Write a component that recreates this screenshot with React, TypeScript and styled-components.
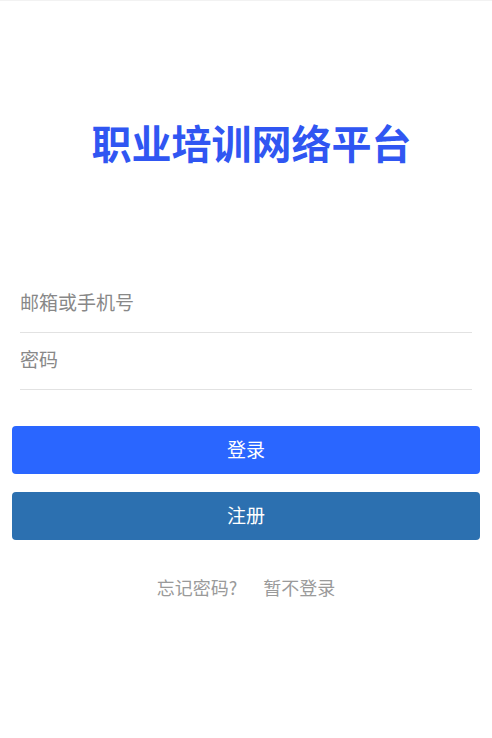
import React from 'react';
import styled, { createGlobalStyle } from 'styled-components';

const GlobalStyle = createGlobalStyle`
    html, body {
        margin: 0;
        padding: 0;
        background: #ffffff;
        font-family: "Noto Sans CJK SC", "Noto Sans", sans-serif;
    }
`;

const Page = styled.div`
    display: flex;
    flex-direction: column;
    min-height: 100vh;
    padding: 0 12px;
    box-sizing: border-box;
    border-top: 1px solid #f2f2f2;
`;

const Title = styled.h1`
    margin: 118px 0 0;
    padding-left: 11px;
    height: 46px;
    line-height: 46px;
    text-align: center;
    font-size: 40px;
    font-weight: 700;
    color: #3056f2;
`;

const Form = styled.div`
    display: flex;
    flex-direction: column;
    margin-top: 111px;
    padding: 0 8px;
`;

const Field = styled.input`
    box-sizing: border-box;
    height: 57px;
    border: none;
    border-bottom: 1px solid #e2e2e2;
    outline: none;
    padding: 0 0 5px;
    font-family: inherit;
    font-size: 19px;
    color: #333;
    background: transparent;

    &::placeholder {
        color: #888888;
    }
`;

const Buttons = styled.div`
    display: flex;
    flex-direction: column;
    gap: 18px;
    margin-top: 36px;
`;

const Button = styled.button<{ $tone: 'primary' | 'secondary' }>`
    height: 48px;
    border: none;
    border-radius: 4px;
    padding: 0 0 4px;
    background: ${(p) => (p.$tone === 'primary' ? '#2a66ff' : '#2c70b0')};
    color: #ffffff;
    font-family: inherit;
    font-size: 19px;
    cursor: pointer;
`;

const Links = styled.div`
    display: flex;
    justify-content: center;
    gap: 26px;
    margin-top: 35px;
    line-height: 24px;
`;

const LinkText = styled.span`
    font-size: 18px;
    color: #9a9a9a;
    cursor: pointer;
`;

const App = () => {
    return (
        <>
            <GlobalStyle />
            <Page>
                <Title>职业培训网络平台</Title>
                <Form>
                    <Field type="text" placeholder="邮箱或手机号" />
                    <Field type="password" placeholder="密码" />
                </Form>
                <Buttons>
                    <Button $tone="primary">登录</Button>
                    <Button $tone="secondary">注册</Button>
                </Buttons>
                <Links>
                    <LinkText>忘记密码?</LinkText>
                    <LinkText>暂不登录</LinkText>
                </Links>
            </Page>
        </>
    );
};

export default App;
